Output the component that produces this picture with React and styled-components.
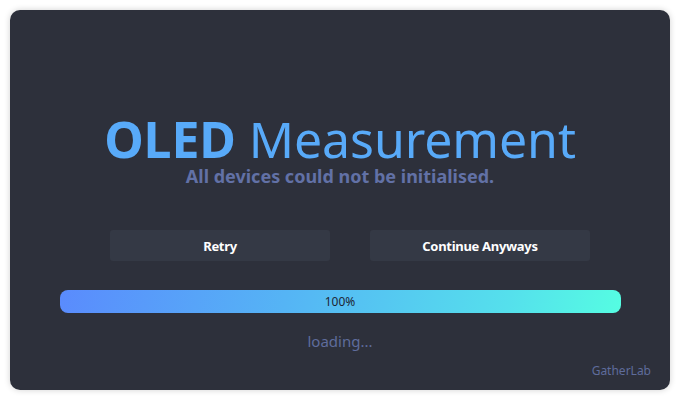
import React from "react";
import styled, { createGlobalStyle } from "styled-components";

const GlobalStyle = createGlobalStyle`
  html, body {
    margin: 0;
    padding: 0;
    background: #ffffff;
  }
  body {
    font-family: "Noto Sans", "Open Sans", sans-serif;
  }
`;

const Window = styled.div`
  margin: 10px;
  width: 660px;
  height: 380px;
  box-sizing: border-box;
  border-radius: 10px;
  background: #2d303b;
  box-shadow: 0 0 6px rgb(0 0 0 / 0.18);
  display: flex;
  flex-direction: column;
  align-items: center;
  padding: 104px 50px 0;
  position: relative;
`;

const Title = styled.h1`
  margin: 0;
  font-size: 50px;
  line-height: 50px;
  font-weight: 400;
  color: #58aaf9;
  letter-spacing: -0.1px;

  b {
    font-weight: 700;
  }
`;

const Subtitle = styled.p`
  margin: 0;
  font-size: 18px;
  line-height: 24px;
  font-weight: 700;
  color: #6271a6;
`;

const Actions = styled.div`
  display: flex;
  gap: 40px;
  margin-top: 42px;
  margin-left: 20px;
`;

const Button = styled.button`
  width: 220px;
  height: 31px;
  border: none;
  border-radius: 3px;
  background: #343945;
  color: #ffffff;
  font-family: inherit;
  font-size: 13px;
  font-weight: 700;
  letter-spacing: -0.3px;
  cursor: pointer;
`;

const Progress = styled.div`
  margin-top: 29px;
  width: 561px;
  height: 23px;
  border-radius: 8px;
  background: linear-gradient(100deg, #5a8bfd 0%, #55b4f5 40%, #55e0ec 80%, #55fde2 100%);
  display: flex;
  align-items: center;
  justify-content: center;
  font-size: 12px;
  color: #1e2633;
`;

const Status = styled.div`
  margin-top: 18px;
  font-size: 15px;
  color: #5f6c9c;
`;

const Brand = styled.div`
  position: absolute;
  right: 19px;
  bottom: 11px;
  font-size: 12px;
  color: #5f6c9c;
`;

export default function App() {
  return (
    <>
      <GlobalStyle />
      <Window>
        <Title>
          <b>OLED</b> Measurement
        </Title>
        <Subtitle>All devices could not be initialised.</Subtitle>
        <Actions>
          <Button>Retry</Button>
          <Button>Continue Anyways</Button>
        </Actions>
        <Progress>100%</Progress>
        <Status>loading...</Status>
        <Brand>GatherLab</Brand>
      </Window>
    </>
  );
}
